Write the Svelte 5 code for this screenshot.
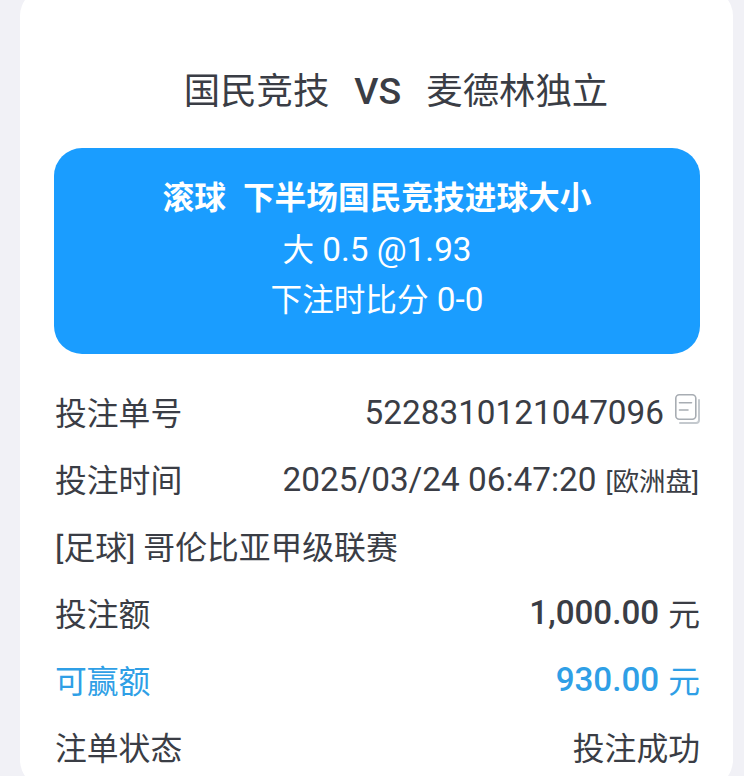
<script>
  const rows = [
    { label: '投注额', value: '1,000.00', unit: '元' },
    { label: '可赢额', value: '930.00', unit: '元', win: true }
  ];
</script>

<div class="page">
  <div class="card">
    <h1 class="title"><span>国民竞技</span><b>VS</b><span>麦德林独立</span></h1>
    <div class="banner">
      <div class="market"><span>滚球</span><span>下半场国民竞技进球大小</span></div>
      <div class="line"><span class="cjk">大</span> 0.5 @1.93</div>
      <div class="line score"><span class="cjk">下注时比分</span> 0-0</div>
    </div>
    <div class="rows">
      <div class="row">
        <span>投注单号</span>
        <span class="val"><span class="num">5228310121047096</span>
          <svg class="copy" width="25" height="30" viewBox="0 0 25 30" fill="none" stroke-linecap="round" aria-hidden="true">
            <path d="M24 6v20a3 3 0 0 1-3 3H5" stroke="#c4c9ce" stroke-width="2"/>
            <rect x="0.8" y="0.8" width="20" height="24.5" rx="3.5" stroke="#a8adb3" stroke-width="1.6"/>
            <path d="M4.5 8.7h12M4.5 16h8.5" stroke="#a8adb3" stroke-width="1.6"/>
          </svg>
        </span>
      </div>
      <div class="row">
        <span>投注时间</span>
        <span class="val"><span class="num">2025/03/24 06:47:20</span> <small>[欧洲盘]</small></span>
      </div>
      <div class="row"><span>[足球] 哥伦比亚甲级联赛</span></div>
      {#each rows as r}
        <div class="row" class:win={r.win}>
          <span>{r.label}</span>
          <span class="val"><strong>{r.value}</strong> {r.unit}</span>
        </div>
      {/each}
      <div class="row">
        <span>注单状态</span>
        <span class="val">投注成功</span>
      </div>
    </div>
  </div>
</div>

<style>
  :global(body) {
    margin: 0;
    background: #f1f1f6;
  }
  .page {
    height: 776px;
    overflow: hidden;
    padding: 0 11px 0 20px;
    box-sizing: border-box;
    font-family: Roboto, "Noto Sans CJK SC", sans-serif;
    color: #3a3d45;
  }
  .card {
    height: 800px;
    margin-top: -12px;
    padding: 12px 33px 0 34px;
    box-sizing: border-box;
    background: #fff;
    border-radius: 28px;
  }
  .title {
    height: 148px;
    margin: 0;
    display: flex;
    align-items: baseline;
    justify-content: center;
    gap: 25px;
    padding: 64px 0 0 38px;
    box-sizing: border-box;
    font-size: 36.4px;
    line-height: 54px;
    font-weight: 400;
    color: #3a3d45;
  }
  .title b {
    font-weight: 500;
    font-size: 37.5px;
  }
  .banner {
    height: 206px;
    background: #1a9dff;
    border-radius: 28px;
    color: #fff;
    text-align: center;
    font-size: 33.3px;
    line-height: 51px;
    padding-top: 25px;
    box-sizing: border-box;
  }
  .market {
    font-weight: 700;
    font-size: 31.7px;
    display: flex;
    justify-content: center;
    gap: 17px;
  }
  .cjk {
    font-size: 31.6px;
  }
  .score {
    margin-top: -2px;
  }
  .rows {
    padding-top: 23px;
  }
  .row {
    height: 67px;
    display: flex;
    justify-content: space-between;
    align-items: center;
    font-size: 31.8px;
    padding-left: 1px;
  }
  .val {
    display: flex;
    align-items: center;
    gap: 9px;
  }
  .num {
    font-size: 33.3px;
    margin-top: 4px;
  }
  .copy {
    margin: 0 0 4px 2px;
  }
  small {
    font-size: 26.5px;
    margin: 4px 1px 0 0;
  }
  strong {
    font-weight: 500;
    font-size: 33.2px;
    margin-top: 2px;
  }
  .win {
    color: #2f9fe6;
  }
</style>
